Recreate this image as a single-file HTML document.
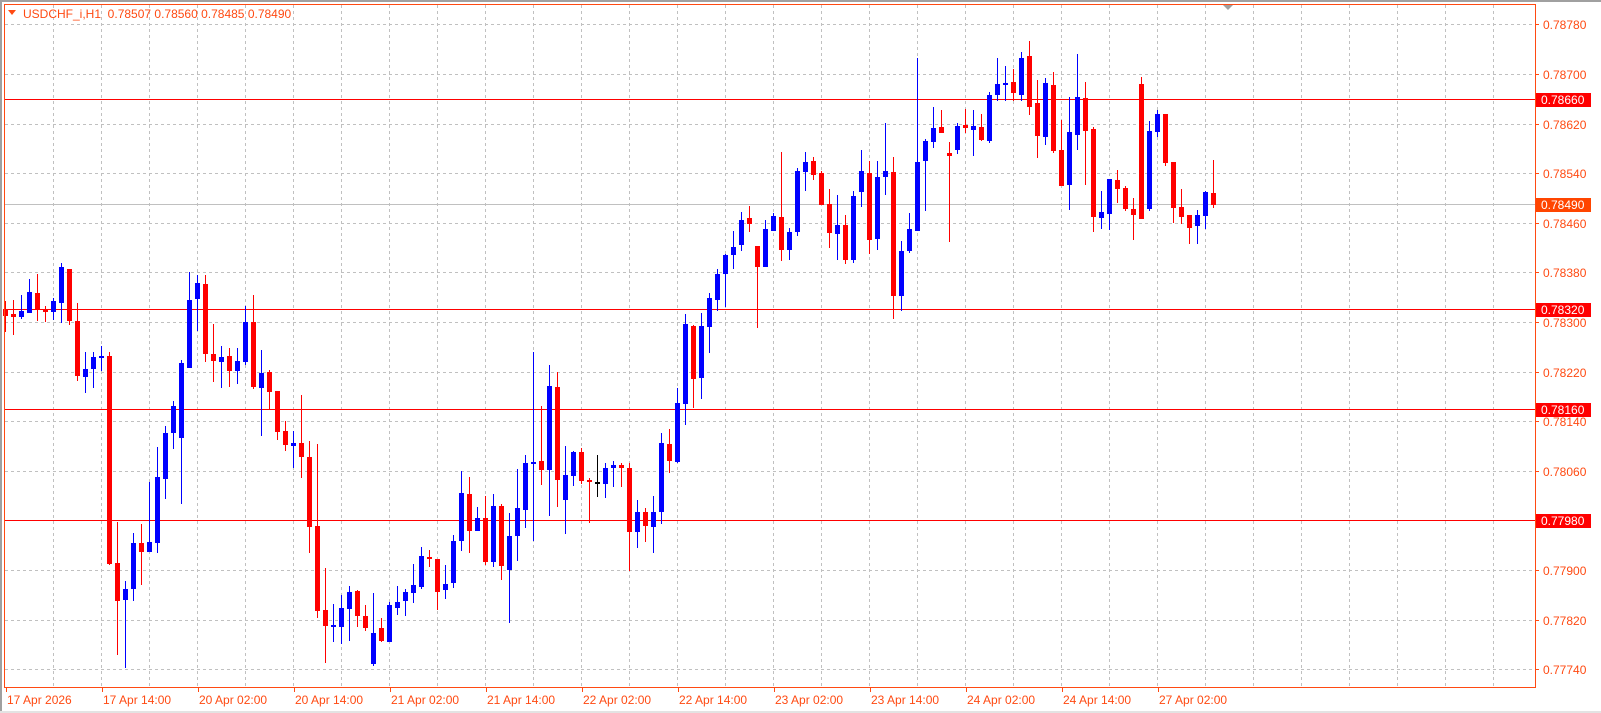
<!DOCTYPE html>
<html><head><meta charset="utf-8"><style>
html,body{margin:0;padding:0;background:#fff;width:1601px;height:713px;overflow:hidden}
svg{display:block}
text{font-family:"Liberation Sans",sans-serif;font-size:12px}
</style></head><body>
<svg id="s" width="1601" height="713" xmlns="http://www.w3.org/2000/svg">
<rect x="0" y="0" width="1601" height="713" fill="#fff"/>
<rect x="0" y="0" width="1601" height="2" fill="#a0a0a0"/>
<rect x="0" y="0" width="2" height="713" fill="#a0a0a0"/>
<rect x="0" y="711" width="1601" height="2" fill="#e3e3e3"/>
<g id="grid" stroke="#c0c0c0" stroke-width="1" stroke-dasharray="3,3"></g>
<g id="hl"></g>
<g id="c"></g>
<rect x="4.5" y="4.5" width="1531" height="683" fill="none" stroke="#ff4a12" stroke-width="1"/>
<polygon points="1223,5 1233,5 1228,10" fill="#a0a0a0"/>
<polygon points="8,10 16,10 12,15" fill="#ff4a12"/>
<text x="23" y="18" fill="#ff4a12">USDCHF_i,H1&#160; 0.78507 0.78560 0.78485 0.78490</text>
<g id="ax" fill="#ff4a12"></g>
</svg>
<script>
function Y(p){return 24.3+(0.7878-p)/0.0008*49.6;}
var g='';
for(var k=0;k<14;k++){var y=Math.round(24.3+49.6*k)+0.5;g+='<line x1="5" x2="1535" y1="'+y+'" y2="'+y+'"/>';}
for(var x=53;x<1535;x+=48){g+='<line x1="'+(x+0.5)+'" x2="'+(x+0.5)+'" y1="5" y2="687"/>';}
document.getElementById('grid').innerHTML=g;
var h='<line x1="5" x2="1535" y1="204.5" y2="204.5" stroke="#c0c0c0"/>';
[0.7866,0.7832,0.7816,0.7798].forEach(function(p){var y=Math.round(Y(p))+0.5;h+='<line x1="5" x2="1535" y1="'+y+'" y2="'+y+'" stroke="#ff0000"/>';});
document.getElementById('hl').innerHTML=h;
var a='';
var labs=['0.78780','0.78700','0.78620','0.78540','0.78460','0.78380','0.78300','0.78220','0.78140','0.78060','0.77980','0.77900','0.77820','0.77740'];
for(var k=0;k<14;k++){var y=Math.round(24.3+49.6*k);a+='<rect x="1535" y="'+y+'" width="4" height="1"/>';if(k!=10)a+='<text x="1543" y="'+(y+5)+'">'+labs[k]+'</text>';}
function box(p,txt,col){var y=Math.round(Y(p));a+='<rect x="1536" y="'+(y-6)+'" width="55" height="14" fill="'+col+'"/><text x="1541" y="'+(y+5)+'" fill="#fff">'+txt+'</text>';}
box(0.7866,'0.78660','#ff0000');box(0.7832,'0.78320','#ff0000');box(0.7816,'0.78160','#ff0000');box(0.7798,'0.77980','#ff0000');box(0.7849,'0.78490','#ff4500');
var tl=['17 Apr 2026','17 Apr 14:00','20 Apr 02:00','20 Apr 14:00','21 Apr 02:00','21 Apr 14:00','22 Apr 02:00','22 Apr 14:00','23 Apr 02:00','23 Apr 14:00','24 Apr 02:00','24 Apr 14:00','27 Apr 02:00'];
for(var k=0;k<13;k++){var x=Math.round(5.7+96*k);a+='<rect x="'+x+'" y="687" width="1" height="5"/><text x="'+(x+1)+'" y="704">'+tl[k]+'</text>';}
document.getElementById('ax').innerHTML=a;
var D=[[301,309,316,332,'r'],[300,314,317,335,'r'],[295,311,317,319,'b'],[279,292,313,313,'b'],[274,293,309,321,'r'],[306,309,312,322,'r'],[298,301,312,320,'b'],[263,267,303,323,'b'],[269,269,321,325,'r'],[303,321,376,381,'r'],
[352,369,377,393,'b'],[352,357,369,388,'b'],[346,356,358,371,'b'],[352,356,564,565,'r'],[522,563,601,655,'r'],[581,589,600,668,'b'],[533,543,589,601,'b'],[524,543,552,585,'r'],[482,542,552,552,'b'],[447,477,543,553,'b'],
[426,433,479,499,'b'],[401,406,433,449,'b'],[360,363,438,504,'b'],[272,300,368,368,'b'],[275,283,299,331,'b'],[275,284,354,362,'r'],[324,354,361,382,'r'],[346,357,362,388,'b'],[348,356,371,387,'r'],[348,361,371,384,'b'],
[306,322,362,365,'b'],[295,322,387,389,'r'],[350,373,388,436,'b'],[370,372,392,410,'r'],[391,391,432,440,'r'],[421,431,445,451,'r'],[431,443,446,468,'b'],[395,443,457,478,'r'],[441,457,527,553,'r'],[444,526,611,618,'r'],
[568,610,626,663,'r'],[604,625,627,642,'b'],[595,608,627,644,'b'],[586,592,609,641,'b'],[590,591,616,627,'r'],[605,616,628,631,'r'],[593,633,664,666,'b'],[618,628,641,642,'r'],[602,605,642,642,'b'],[586,602,608,615,'b'],
[589,592,601,616,'b'],[564,585,593,603,'b'],[547,556,587,589,'b'],[550,557,559,567,'r'],[559,559,592,610,'r'],[565,584,590,599,'b'],[535,541,583,588,'b'],[471,493,541,551,'b'],[477,494,531,553,'r'],[507,518,531,531,'b'],
[496,518,562,565,'r'],[494,506,562,567,'b'],[504,506,566,580,'r'],[513,536,570,623,'b'],[469,508,536,561,'b'],[455,463,510,528,'b'],[352,462,463,541,'b'],[406,461,470,485,'r'],[365,386,470,516,'b'],[372,387,480,507,'r'],
[446,475,500,534,'b'],[451,452,476,486,'b'],[448,452,481,484,'r'],[478,480,481,523,'r'],[455,482,482,497,'k'],[463,468,484,498,'b'],[461,465,468,487,'b'],[463,465,468,487,'r'],[463,468,532,571,'r'],[500,512,532,548,'b'],
[508,512,526,542,'r'],[496,512,527,553,'b'],[433,443,512,524,'b'],[429,444,461,473,'r'],[388,403,462,463,'b'],[314,324,404,425,'b'],[325,326,379,408,'r'],[313,326,378,399,'b'],[293,298,327,353,'b'],[269,274,300,311,'b'],
[254,255,274,307,'b'],[231,247,255,269,'b'],[212,220,245,251,'b'],[206,218,224,232,'r'],[246,246,267,328,'r'],[220,229,267,267,'b'],[213,216,231,231,'b'],[152,217,250,261,'r'],[228,232,250,260,'b'],[168,171,232,236,'b'],
[152,162,172,191,'b'],[157,161,175,180,'r'],[171,173,205,205,'r'],[189,204,233,248,'r'],[195,225,234,260,'b'],[215,225,260,264,'r'],[191,196,260,263,'b'],[150,171,192,207,'b'],[161,173,240,254,'r'],[161,177,239,250,'b'],
[123,171,177,195,'b'],[157,172,296,319,'r'],[241,251,296,311,'b'],[213,229,251,253,'b'],[58,162,231,231,'b'],[139,141,161,211,'b'],[107,128,142,148,'b'],[110,127,133,133,'r'],[142,153,156,242,'r'],[123,126,150,154,'b'],
[109,125,128,133,'r'],[110,126,130,156,'b'],[114,127,140,141,'r'],[92,95,141,143,'b'],[58,84,95,101,'b'],[66,83,85,101,'b'],[69,82,93,101,'r'],[52,58,95,101,'b'],[41,56,107,115,'r'],[80,103,136,158,'r'],
[78,83,137,145,'b'],[72,85,151,153,'r'],[120,150,186,186,'r'],[97,132,185,210,'b'],[54,97,135,150,'b'],[82,98,131,185,'r'],[127,129,217,232,'r'],[191,212,218,229,'b'],[179,179,214,230,'b'],[170,180,189,203,'r'],
[186,188,209,211,'r'],[198,209,215,240,'r'],[77,84,219,219,'r'],[121,131,209,211,'b'],[110,114,132,137,'b'],[114,114,163,166,'r'],[162,162,208,223,'r'],[189,207,217,224,'r'],[215,215,228,244,'r'],[210,215,226,244,'b'],
[191,192,216,229,'b'],[160,193,205,208,'r']];
var c='';
D.forEach(function(d,i){var col=d[4]=='b'?'#0000ff':(d[4]=='r'?'#ff0000':'#000');var wx=5+8*i,bx=3+8*i;
c+='<rect x="'+wx+'" y="'+d[0]+'" width="1" height="'+Math.max(1,d[3]-d[0])+'" fill="'+col+'"/>';
c+='<rect x="'+bx+'" y="'+d[1]+'" width="5" height="'+Math.max(2,d[2]-d[1])+'" fill="'+col+'"/>';});
document.getElementById('c').innerHTML=c;
</script>
</body></html>
